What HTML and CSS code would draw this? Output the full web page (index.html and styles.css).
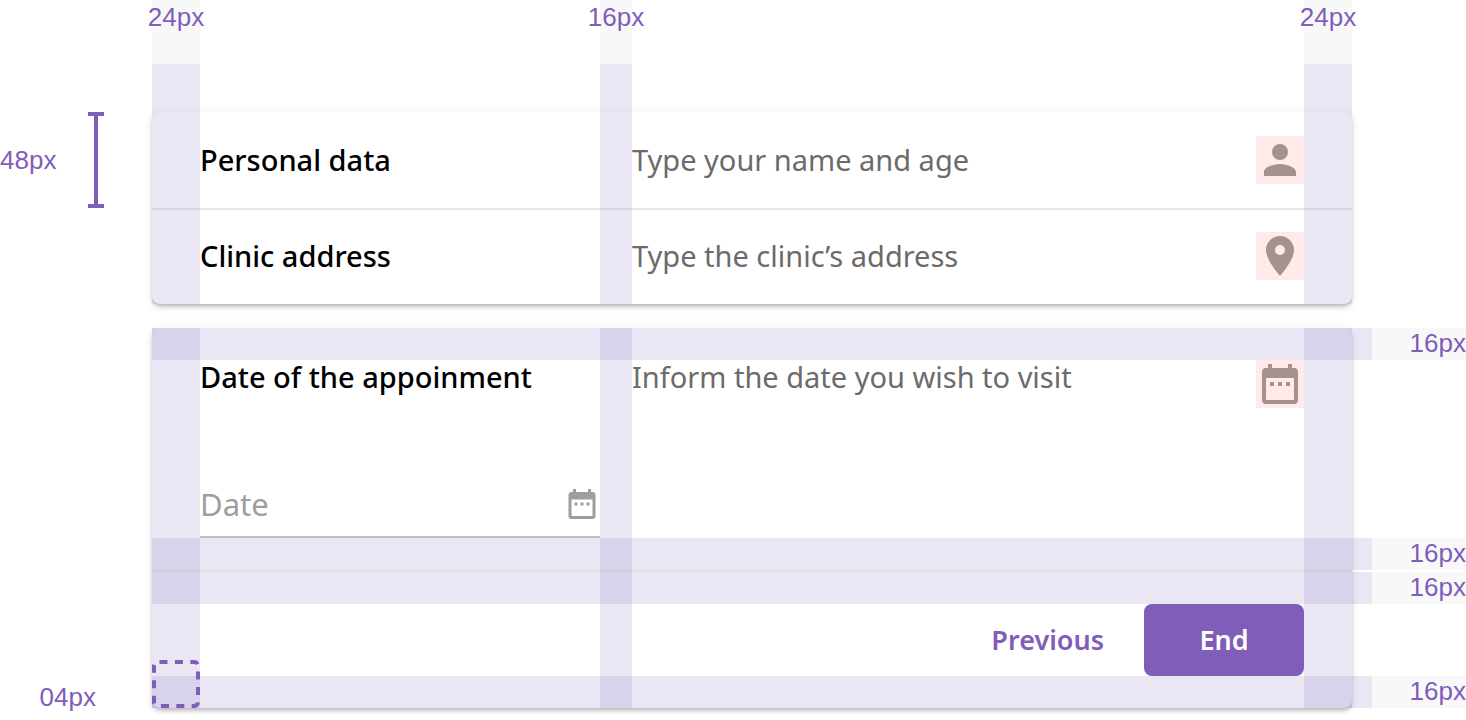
FILE: index.html
```html
<!DOCTYPE html>
<html lang="en">
<head>
<meta charset="utf-8">
<title>Expansion panel spacing</title>
<link rel="stylesheet" href="styles.css">
</head>
<body>
<svg class="symbols" aria-hidden="true">
  <symbol id="calendar" viewBox="0 0 24 24"><path fill-rule="evenodd" d="M6 2h2v2h8V2h2v2h1a2 2 0 0 1 2 2v14a2 2 0 0 1-2 2H5a2 2 0 0 1-2-2V6a2 2 0 0 1 2-2h1zM5 9v11h14V9zM7 11h2v2H7zM11 11h2v2h-2zM15 11h2v2h-2z"/></symbol>
</svg>
<main class="spec">
  <div class="rulers">
    <div class="ruler"><span class="measure">24px</span></div>
    <div class="ruler ruler-mid"><span class="measure">16px</span></div>
    <div class="ruler ruler-end"><span class="measure">24px</span></div>
  </div>

  <div class="side side-row">
    <span class="measure">48px</span>
    <span class="bracket"></span>
  </div>
  <section class="card">
    <div class="row">
      <h2 class="title">Personal data</h2>
      <p class="hint">Type your name and age</p>
      <svg class="icon" viewBox="0 0 24 24" aria-hidden="true"><path d="M12 12a4 4 0 1 0 0-8 4 4 0 0 0 0 8zm0 2c-2.67 0-8 1.34-8 4v2h16v-2c0-2.66-5.33-4-8-4z"/></svg>
    </div>
    <div class="row row-divided">
      <h2 class="title">Clinic address</h2>
      <p class="hint">Type the clinic’s address</p>
      <svg class="icon" viewBox="0 0 24 24" aria-hidden="true"><path d="M12 2C8.13 2 5 5.13 5 9c0 5.25 7 13 7 13s7-7.75 7-13c0-3.87-3.13-7-7-7zm0 9.5a2.5 2.5 0 1 1 0-5 2.5 2.5 0 0 1 0 5z"/></svg>
    </div>
    <div class="guides"><i class="guide"></i><i class="guide guide-mid"></i><i class="guide guide-end"></i></div>
  </section>

  <div class="side side-corner"><span class="measure">04px</span></div>
  <section class="card card-open">
    <div class="band"><span class="band-label measure">16px</span></div>
    <div class="row row-open">
      <h2 class="title" id="date-title">Date of the appoinment</h2>
      <p class="hint">Inform the date you wish to visit</p>
      <svg class="icon" aria-hidden="true"><use href="#calendar"/></svg>
    </div>
    <div class="field">
      <input class="field-input" type="text" placeholder="Date" aria-labelledby="date-title">
      <button class="field-button" type="button" aria-label="Open calendar"><svg class="field-icon" aria-hidden="true"><use href="#calendar"/></svg></button>
    </div>
    <div class="band"><span class="band-label measure">16px</span></div>
    <hr class="divider">
    <div class="band"><span class="band-label measure">16px</span></div>
    <div class="actions">
      <button class="button" type="button">Previous</button>
      <button class="button button-primary" type="button">End</button>
    </div>
    <div class="band"><span class="band-label measure">16px</span></div>
    <div class="guides"><i class="guide"></i><i class="guide guide-mid"></i><i class="guide guide-end"></i></div>
    <svg class="corner" viewBox="0 0 48 48" aria-hidden="true"><path d="M6 2H42A4 4 0 0 1 46 6V42A4 4 0 0 1 42 46H6A4 4 0 0 1 2 42V6A4 4 0 0 1 6 2"/></svg>
  </section>
</main>
</body>
</html>
```
FILE: styles.css
```css
:root {
  --purple: #7f5db9;
  --tint: rgba(150, 130, 200, .2);
  --grey: #f8f8f8;
  --right: 114px;
}

* { box-sizing: border-box; }

body {
  margin: 0;
  background: #fff;
  font-family: "Noto Sans", "Open Sans", sans-serif;
  font-size: 29px;
  line-height: 34px;
}

.symbols { display: none; }

.spec {
  display: grid;
  grid-template-columns: 152px minmax(0, 1fr) var(--right);
  overflow: hidden;
  padding-bottom: 12px;
}

.measure {
  color: var(--purple);
  font-family: "Liberation Sans", Arial, sans-serif;
  font-size: 26px;
  line-height: 30px;
  white-space: nowrap;
}

.rulers,
.guides {
  display: grid;
  grid-template-columns: 48px 400px 32px minmax(0, 1fr) 48px;
}

.rulers { grid-column: 2; }

.ruler {
  display: flex;
  justify-content: center;
  height: 112px;
  padding-top: 2px;
  background: linear-gradient(var(--grey) 64px, var(--tint) 64px);
}

.ruler-mid, .guide-mid { grid-column: 3; }
.ruler-end, .guide-end { grid-column: 5; }

.side { grid-column: 1; display: flex; }

.side-row {
  align-items: center;
  gap: 32px;
  height: 96px;
}

.bracket {
  width: 16px;
  height: 96px;
  border: solid var(--purple);
  border-width: 4px 0;
  background: linear-gradient(var(--purple), var(--purple)) center / 4px 100% no-repeat;
}

.side-corner {
  align-items: flex-end;
  justify-content: flex-end;
  margin-bottom: -4px;
  padding-right: 56px;
}

.card {
  grid-column: 2;
  position: relative;
  border-radius: 8px;
  background: #fff;
  box-shadow: 0 3px 4px -1px rgba(0, 0, 0, .26), 0 2px 8px rgba(0, 0, 0, .1);
}

.card-open, .side-corner { margin-top: 24px; }

.guides {
  position: absolute;
  inset: 0;
  pointer-events: none;
}

.guide { background: var(--tint); }

.row {
  display: grid;
  grid-template-columns: 400px minmax(0, 1fr) 48px;
  column-gap: 32px;
  align-items: center;
  height: 96px;
  padding: 0 48px;
}

.row-divided { box-shadow: inset 0 2px #e6e6e8; }

.row-open {
  align-items: start;
  height: auto;
}

.title, .hint {
  margin: 0;
  font-size: inherit;
  font-weight: 400;
}

.title { font-weight: 500; color: #000; }
.hint { color: #6b6b6b; }

.icon {
  width: 48px;
  height: 48px;
  background: #ffeae9;
  fill: #a59190;
}

.field {
  display: flex;
  align-items: center;
  width: 400px;
  height: 66px;
  margin: 64px 0 0 48px;
  border-bottom: 2px solid #c0c0c0;
}

.field-input {
  flex: 1;
  min-width: 0;
  padding: 0;
  border: 0;
  outline: 0;
  background: none;
  color: #000;
  font: inherit;
  font-size: 31px;
}

.field-input::placeholder { color: #9e9e9e; opacity: 1; }

.field-button {
  display: flex;
  padding: 0;
  border: 0;
  background: none;
}

.field-icon { width: 36px; height: 36px; fill: #9e9e9e; }

.band {
  display: flex;
  justify-content: flex-end;
  height: 32px;
  margin-right: calc(-1 * var(--right));
  background: linear-gradient(var(--tint), var(--tint)) 0 0 / calc(100% - 94px) 100% no-repeat;
}

.band-label {
  width: 94px;
  background: var(--grey);
  text-align: right;
}

.divider {
  height: 2px;
  margin: 0;
  border: 0;
  background: #e0dfe3;
}

.actions {
  display: flex;
  align-items: center;
  justify-content: flex-end;
  gap: 40px;
  padding: 0 48px;
}

.button {
  padding: 0;
  border: 0;
  background: none;
  color: var(--purple);
  font: inherit;
  font-size: 27px;
  font-weight: 600;
}

.button-primary {
  width: 160px;
  height: 72px;
  border-radius: 8px;
  background: var(--purple);
  color: #fff;
}

.corner {
  position: absolute;
  left: 0;
  bottom: 0;
  width: 48px;
  height: 48px;
  fill: none;
  stroke: var(--purple);
  stroke-width: 4;
  stroke-dasharray: 8 7.4;
  stroke-dashoffset: -1.5;
}
```
